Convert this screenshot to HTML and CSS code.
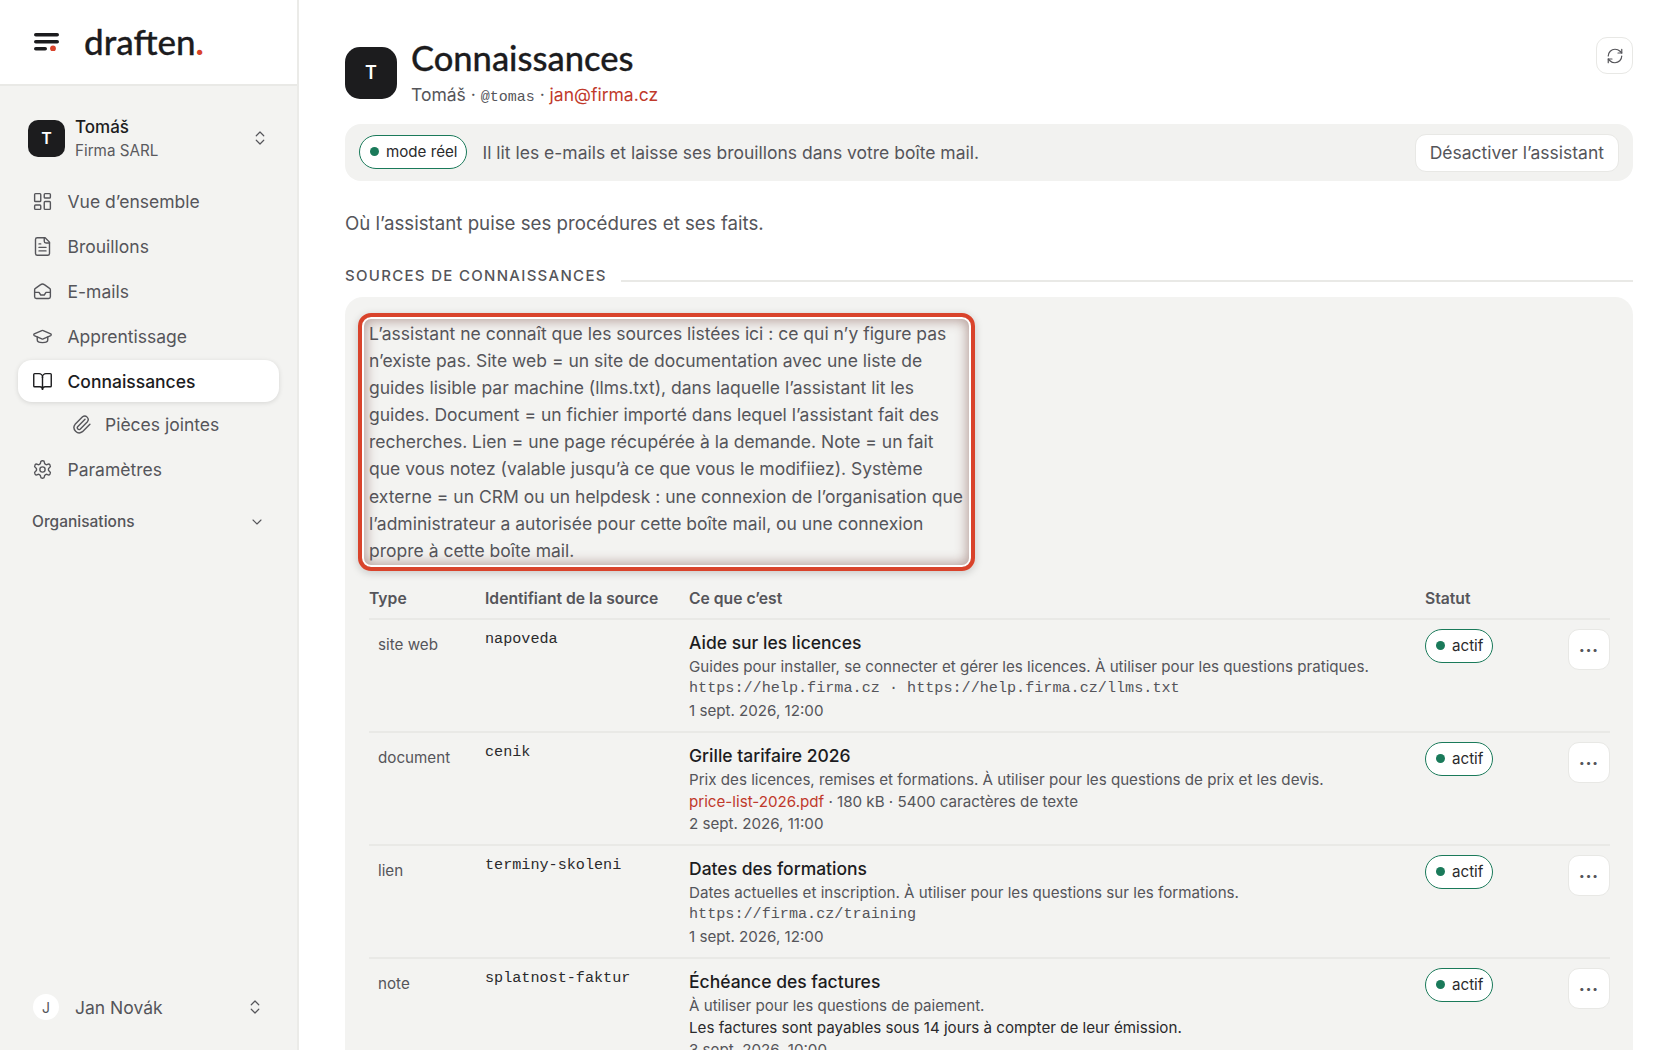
FILE: index.html
```html
<!DOCTYPE html>
<html lang="fr">
<head>
    <meta charset="UTF-8">
    <title>Connaissances</title>
    <link rel="stylesheet" href="styles.css">
</head>
<body>
    <aside class="sidebar">
        <div class="brand">
            <svg class="brand-icon" viewBox="0 0 26 18" width="26" height="18">
                <rect x="0" y="0" width="25" height="3.6" rx="1.8" fill="#1c1c1e"/>
                <rect x="0" y="7" width="25" height="3.6" rx="1.8" fill="#1c1c1e"/>
                <rect x="0" y="14" width="13" height="3.6" rx="1.8" fill="#1c1c1e"/>
                <circle cx="19" cy="15.5" r="2.9" fill="#d9432b"/>
            </svg>
            <span class="brand-name">draften<b>.</b></span>
        </div>
        <div class="side-body">
            <div class="workspace">
                <span class="avatar avatar-sm">T</span>
                <div class="workspace-text">
                    <strong>Tomáš</strong>
                    <span>Firma SARL</span>
                </div>
                <svg class="updown" viewBox="0 0 24 24"><path d="m7 15 5 5 5-5"/><path d="m7 9 5-5 5 5"/></svg>
            </div>
            <nav class="nav">
                <a href="#"><svg viewBox="0 0 24 24"><rect x="3" y="3" width="7" height="9" rx="1"/><rect x="14" y="3" width="7" height="5" rx="1"/><rect x="14" y="12" width="7" height="9" rx="1"/><rect x="3" y="16" width="7" height="5" rx="1"/></svg>Vue d’ensemble</a>
                <a href="#"><svg viewBox="0 0 24 24"><path d="M15 2H6a2 2 0 0 0-2 2v16a2 2 0 0 0 2 2h12a2 2 0 0 0 2-2V7Z"/><path d="M14 2v4a2 2 0 0 0 2 2h4"/><path d="M8 13h8"/><path d="M8 17h8"/><path d="M8 9h2"/></svg>Brouillons</a>
                <a href="#"><svg viewBox="0 0 24 24"><path d="M3 13V10a2 2 0 0 1 .9-1.6l6-4.2a3.5 3.5 0 0 1 4.2 0l6 4.2A2 2 0 0 1 21 10v8a2 2 0 0 1-2 2H5a2 2 0 0 1-2-2Z"/><path d="M3 13h5l2 3h4l2-3h5"/></svg>E-mails</a>
                <a href="#"><svg viewBox="0 0 24 24"><path d="M21.4 10.9a1 1 0 0 0 0-1.8L12.8 5.2a2 2 0 0 0-1.6 0L2.6 9.1a1 1 0 0 0 0 1.8l8.6 3.9a2 2 0 0 0 1.6 0Z"/><path d="M6 12.5V16a6 3 0 0 0 12 0v-3.5"/></svg>Apprentissage</a>
                <a href="#" class="active"><svg viewBox="0 0 24 24"><path d="M12 7v14"/><path d="M3 18a1 1 0 0 1-1-1V4a1 1 0 0 1 1-1h5a4 4 0 0 1 4 4 4 4 0 0 1 4-4h5a1 1 0 0 1 1 1v13a1 1 0 0 1-1 1h-6a3 3 0 0 0-3 3 3 3 0 0 0-3-3Z"/></svg>Connaissances</a>
                <a href="#" class="sub"><svg viewBox="0 0 24 24"><path d="m16 6-8.4 8.6a2 2 0 0 0 2.8 2.8l8.4-8.6a4 4 0 0 0-5.6-5.6l-8.5 8.6a6 6 0 0 0 8.4 8.4l8.5-8.6"/></svg>Pièces jointes</a>
                <a href="#"><svg viewBox="0 0 24 24"><path d="M12.2 2h-.4a2 2 0 0 0-2 2v.2a2 2 0 0 1-1 1.7l-.4.3a2 2 0 0 1-2 0l-.2-.1a2 2 0 0 0-2.7.7l-.2.4a2 2 0 0 0 .7 2.7l.2.1a2 2 0 0 1 1 1.7v.5a2 2 0 0 1-1 1.8l-.2.1a2 2 0 0 0-.7 2.7l.2.4a2 2 0 0 0 2.7.7l.2-.1a2 2 0 0 1 2 0l.4.3a2 2 0 0 1 1 1.7v.2a2 2 0 0 0 2 2h.4a2 2 0 0 0 2-2v-.2a2 2 0 0 1 1-1.7l.4-.3a2 2 0 0 1 2 0l.2.1a2 2 0 0 0 2.7-.7l.2-.4a2 2 0 0 0-.7-2.7l-.2-.1a2 2 0 0 1-1-1.8v-.5a2 2 0 0 1 1-1.7l.2-.1a2 2 0 0 0 .7-2.7l-.2-.4a2 2 0 0 0-2.7-.7l-.2.1a2 2 0 0 1-2 0l-.4-.3a2 2 0 0 1-1-1.7V4a2 2 0 0 0-2-2Z"/><circle cx="12" cy="12" r="3"/></svg>Paramètres</a>
            </nav>
            <div class="org-head">
                <span>Organisations</span>
                <svg viewBox="0 0 24 24"><path d="m6 9 6 6 6-6"/></svg>
            </div>
            <div class="side-user">
                <span class="avatar-round">J</span>
                <span class="side-user-name">Jan Novák</span>
                <svg class="updown" viewBox="0 0 24 24"><path d="m7 15 5 5 5-5"/><path d="m7 9 5-5 5 5"/></svg>
            </div>
        </div>
    </aside>

    <main class="main">
        <header class="page-head">
            <span class="avatar avatar-lg">T</span>
            <div class="page-title">
                <h1>Connaissances</h1>
                <p>Tomáš · <code>@tomas</code> · <a href="#">jan@firma.cz</a></p>
            </div>
            <button class="icon-btn" title="Actualiser">
                <svg viewBox="0 0 24 24"><path d="M3 12a9 9 0 0 1 9-9 9.75 9.75 0 0 1 6.74 2.74L21 8"/><path d="M21 3v5h-5"/><path d="M21 12a9 9 0 0 1-9 9 9.75 9.75 0 0 1-6.74-2.74L3 16"/><path d="M8 16H3v5"/></svg>
            </button>
        </header>

        <div class="banner">
            <span class="pill pill-wide"><i></i>mode réel</span>
            <span class="banner-text">Il lit les e-mails et laisse ses brouillons dans votre boîte mail.</span>
            <button class="btn">Désactiver l’assistant</button>
        </div>

        <p class="lead">Où l’assistant puise ses procédures et ses faits.</p>

        <div class="section-head">
            <h2>Sources de connaissances</h2>
            <span class="section-line"></span>
        </div>

        <section class="card">
            <p class="intro">L’assistant ne connaît que les sources listées ici : ce qui n’y figure pas n’existe pas. Site web = un site de documentation avec une liste de guides lisible par machine (llms.txt), dans laquelle l’assistant lit les guides. Document = un fichier importé dans lequel l’assistant fait des recherches. Lien = une page récupérée à la demande. Note = un fait que vous notez (valable jusqu’à ce que vous le modifiiez). Système externe = un CRM ou un helpdesk : une connexion de l’organisation que l’administrateur a autorisée pour cette boîte mail, ou une connexion propre à cette boîte mail.</p>

            <table class="sources">
                <thead>
                    <tr>
                        <th class="col-type">Type</th>
                        <th class="col-id">Identifiant de la source</th>
                        <th class="col-what">Ce que c’est</th>
                        <th class="col-status">Statut</th>
                        <th class="col-actions"></th>
                    </tr>
                </thead>
                <tbody>
                    <tr>
                        <td class="type">site web</td>
                        <td class="ident">napoveda</td>
                        <td>
                            <div class="src-title">Aide sur les licences</div>
                            <div class="src-line">Guides pour installer, se connecter et gérer les licences. À utiliser pour les questions pratiques.</div>
                            <div class="src-line mono">https://help.firma.cz · https://help.firma.cz/llms.txt</div>
                            <div class="src-line">1 sept. 2026, 12:00</div>
                        </td>
                        <td class="status"><span class="pill"><i></i>actif</span></td>
                        <td class="actions"><button class="more">•••</button></td>
                    </tr>
                    <tr>
                        <td class="type">document</td>
                        <td class="ident">cenik</td>
                        <td>
                            <div class="src-title">Grille tarifaire 2026</div>
                            <div class="src-line">Prix des licences, remises et formations. À utiliser pour les questions de prix et les devis.</div>
                            <div class="src-line"><a href="#">price-list-2026.pdf</a> · 180 kB · 5400 caractères de texte</div>
                            <div class="src-line">2 sept. 2026, 11:00</div>
                        </td>
                        <td class="status"><span class="pill"><i></i>actif</span></td>
                        <td class="actions"><button class="more">•••</button></td>
                    </tr>
                    <tr>
                        <td class="type">lien</td>
                        <td class="ident">terminy-skoleni</td>
                        <td>
                            <div class="src-title">Dates des formations</div>
                            <div class="src-line">Dates actuelles et inscription. À utiliser pour les questions sur les formations.</div>
                            <div class="src-line mono">https://firma.cz/training</div>
                            <div class="src-line">1 sept. 2026, 12:00</div>
                        </td>
                        <td class="status"><span class="pill"><i></i>actif</span></td>
                        <td class="actions"><button class="more">•••</button></td>
                    </tr>
                    <tr>
                        <td class="type">note</td>
                        <td class="ident">splatnost-faktur</td>
                        <td>
                            <div class="src-title">Échéance des factures</div>
                            <div class="src-line">À utiliser pour les questions de paiement.</div>
                            <div class="src-line dark">Les factures sont payables sous 14 jours à compter de leur émission.</div>
                            <div class="src-line">3 sept. 2026, 10:00</div>
                        </td>
                        <td class="status"><span class="pill"><i></i>actif</span></td>
                        <td class="actions"><button class="more">•••</button></td>
                    </tr>
                </tbody>
            </table>
        </section>
    </main>
</body>
</html>
```

FILE: styles.css
```css
* { box-sizing: border-box; }
html, body { height: 100%; }
body { margin: 0; display: flex; height: 1050px; overflow: hidden; background: #fff; color: #1c1c1e; font-family: Inter, "Liberation Sans", sans-serif; font-size: 16px; }
a { color: inherit; text-decoration: none; }
button { font-family: inherit; cursor: pointer; }
svg { fill: none; stroke: currentColor; stroke-width: 1.6; stroke-linecap: round; stroke-linejoin: round; flex: none; }

/* sidebar */
.sidebar { width: 299px; flex: none; display: flex; flex-direction: column; border-right: 2px solid #ebebe8; background: #f3f3f1; }
.brand { height: 86px; flex: none; display: flex; align-items: center; gap: 24px; padding: 0 0 0 34px; background: #fff; border-bottom: 2px solid #e9e9e6; }
.brand-icon { stroke: none; margin-top: -1px; }
.brand-name { margin-top: -2px; font-family: Lato, sans-serif; font-size: 35px; font-weight: 500; color: #1c1c1e; line-height: 1; -webkit-text-stroke: 0.3px #1c1c1e; }
.brand-name b { color: #d9432b; font-weight: 700; -webkit-text-stroke: 0; }
.side-body { flex: 1; display: flex; flex-direction: column; padding: 0 18px; }
.workspace { display: flex; align-items: center; margin: 33px 0 0 10px; height: 38px; }
.avatar { display: flex; align-items: center; justify-content: center; background: #1c1c1e; color: #fff; font-weight: 600; flex: none; }
.avatar-sm { width: 37px; height: 37px; border-radius: 10px; font-size: 16px; }
.avatar-lg { width: 52px; height: 52px; border-radius: 15px; font-size: 18px; }
.workspace-text { display: flex; flex-direction: column; margin-left: 10px; flex: 1; }
.workspace-text strong { font-weight: 500; font-size: 17px; line-height: 24px; }
.workspace-text span { font-size: 15.2px; line-height: 23px; color: #5a5a5e; }
.updown { width: 18px; height: 18px; margin-right: 10px; color: #55555a; }
.nav { display: flex; flex-direction: column; margin-top: 23px; }
.nav a { display: flex; align-items: center; gap: 14.5px; height: 42px; margin-bottom: 3px; padding-left: 14px; color: #55555a; font-size: 17.5px; border-radius: 14px; }
.nav a svg { width: 21px; height: 21px; }
.nav a.active { background: #fff; color: #1c1c1e; font-weight: 500; box-shadow: 0 1px 5px rgba(0, 0, 0, 0.12); margin-bottom: 1px; }
.nav a.sub { padding-left: 53px; gap: 13px; }
.org-head { display: flex; align-items: center; justify-content: space-between; margin-top: 19px; padding: 0 14px 0 14px; color: #55555a; font-size: 15.5px; font-weight: 500; }
.org-head svg { width: 16px; height: 16px; }
.side-user { display: flex; align-items: center; margin-top: auto; margin-bottom: 30px; padding-left: 15px; }
.avatar-round { width: 26px; height: 26px; border-radius: 50%; background: #fff; display: flex; align-items: center; justify-content: center; font-size: 14px; color: #55555a; }
.side-user-name { flex: 1; margin-left: 16px; color: #55555a; font-size: 17.5px; }
.side-user .updown { margin-right: 15px; }

/* main */
.main { flex: 1; min-width: 0; padding: 24px 47px 0 46px; }
.page-head { display: flex; align-items: center; height: 100px; }
.page-head .avatar-lg { margin-top: -3px; }
.page-title { margin-left: 14px; flex: 1; }
.page-title h1 { margin: -1px 0 0; font-family: Lato, sans-serif; font-size: 34.5px; font-weight: 500; line-height: 44px; -webkit-text-stroke: 0.3px #1c1c1e; }
.page-title p { margin: 2px 0 0; font-size: 17.5px; line-height: 26px; color: #55555a; }
.page-title code { font-family: "Liberation Mono", monospace; font-size: 15px; }
.page-title a { color: #c0392b; }
.icon-btn { align-self: flex-start; width: 37px; height: 37px; margin-top: 13px; padding: 0; display: flex; align-items: center; justify-content: center; background: #fff; border: 1px solid #e8e8e5; border-radius: 11px; color: #55555a; }
.icon-btn svg { width: 18px; height: 18px; }
.banner { display: flex; align-items: center; height: 57px; padding: 0 14px 0 14px; background: #f2f2f0; border-radius: 16px; }
.pill { display: inline-flex; align-items: center; gap: 7px; height: 34px; padding: 0 9px 0 10px; background: #fff; border: 1.5px solid #1a7a5a; border-radius: 17px; color: #2a2a2c; font-size: 15.15px; }
.pill i { width: 9px; height: 9px; border-radius: 50%; background: #1a7a5a; }
.banner .pill { margin-top: -2px; }
.banner-text { flex: 1; margin-left: 15px; color: #55555a; font-size: 17.5px; }
.btn { height: 38px; padding: 0 14px; background: #fff; border: 1px solid #e8e8e5; border-radius: 11px; color: #55555a; font-size: 17.5px; }
.lead { margin: 29px 0 0; color: #55555a; font-size: 18.7px; line-height: 28px; }
.section-head { display: flex; align-items: center; gap: 14px; margin-top: 27px; }
.section-head h2 { margin: 0; font-size: 15px; font-weight: 500; line-height: 22px; letter-spacing: 1.3px; text-transform: uppercase; color: #55555a; }
.section-line { flex: 1; height: 2px; margin-top: 10px; background: #e9e9e6; }

.card { margin-top: 10px; padding: 16px 23px 24px 24px; background: #f3f3f1; border-radius: 18px; }
.intro { position: relative; width: 597px; margin: 7px 0 0; color: #55555a; font-size: 17.5px; line-height: 27.1px; }
.intro::after { content: ""; position: absolute; inset: -7px -9px -7px -11px; border: 4px solid #d9432b; border-radius: 13px; box-shadow: 0 2px 8px rgba(0, 0, 0, 0.18), inset 0 0 0 2px #fff, inset 0 0 12px 4px rgba(110, 60, 50, 0.45); pointer-events: none; }

.sources { width: 100%; margin-top: 11px; border-collapse: collapse; table-layout: fixed; }
.sources th { height: 44px; padding: 5px 0 0; text-align: left; font-size: 15.7px; font-weight: 600; color: #55555a; border-bottom: 2px solid #e9e9e6; }
.col-type { width: 116px; }
.col-id { width: 204px; }
.col-status { width: 115px; }
.col-actions { width: 70px; }
.sources td { height: 113px; padding: 11px 0 0; vertical-align: top; border-bottom: 2px solid #e9e9e6; }
.sources td.type { padding: 15px 0 0 9px; color: #55555a; font-size: 15.2px; }
.sources td.ident { padding-top: 10px; font-family: "Liberation Mono", monospace; font-size: 15.15px; color: #2a2a2c; }
.sources td.status { padding-top: 9px; }
.src-title { font-size: 17.5px; font-weight: 500; line-height: 24px; margin-bottom: 1px; }
.src-line { font-size: 15.15px; line-height: 21px; color: #55555a; margin-top: 1px; }
.src-line a { color: #c0392b; }
.src-line.mono { font-family: "Liberation Mono", monospace; white-space: nowrap; }
.src-line.dark { color: #2a2a2c; }
.sources td.actions { text-align: right; padding-top: 9px; }
.more { width: 42px; height: 41px; padding: 0; background: #fff; border: 1px solid #e8e8e5; border-radius: 11px; color: #55555a; font-size: 10px; letter-spacing: 1px; }
```
